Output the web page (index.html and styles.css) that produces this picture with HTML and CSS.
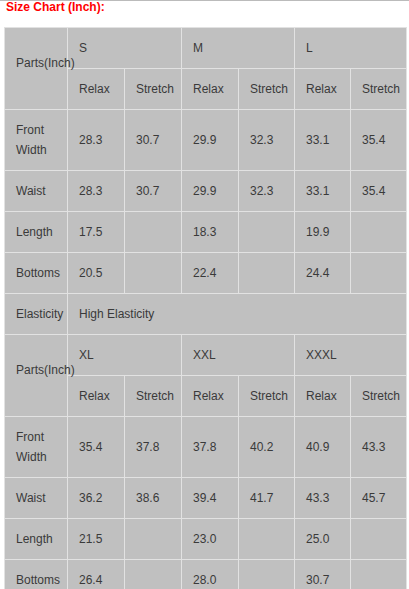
FILE: index.html
```html
<!DOCTYPE html>
<html>
<head>
<meta charset="utf-8">
<link rel="stylesheet" href="styles.css">
</head>
<body>
<div class="page">
  <div class="title">Size Chart (Inch):</div>
  <table class="chart">
    <colgroup>
      <col class="c-first"><col class="c57"><col class="c57"><col class="c57"><col class="c56"><col class="c56"><col class="c56">
    </colgroup>
    <tbody>
      <tr><td rowspan="2" class="parts">Parts(Inch)</td><td colspan="2">S</td><td colspan="2">M</td><td colspan="2">L</td></tr>
      <tr><td>Relax</td><td>Stretch</td><td>Relax</td><td>Stretch</td><td>Relax</td><td>Stretch</td></tr>
      <tr><td>Front Width</td><td>28.3</td><td>30.7</td><td>29.9</td><td>32.3</td><td>33.1</td><td>35.4</td></tr>
      <tr><td>Waist</td><td>28.3</td><td>30.7</td><td>29.9</td><td>32.3</td><td>33.1</td><td>35.4</td></tr>
      <tr><td>Length</td><td>17.5</td><td></td><td>18.3</td><td></td><td>19.9</td><td></td></tr>
      <tr><td>Bottoms</td><td>20.5</td><td></td><td>22.4</td><td></td><td>24.4</td><td></td></tr>
      <tr><td>Elasticity</td><td colspan="6">High Elasticity</td></tr>
      <tr><td rowspan="2" class="parts">Parts(Inch)</td><td colspan="2">XL</td><td colspan="2">XXL</td><td colspan="2">XXXL</td></tr>
      <tr><td>Relax</td><td>Stretch</td><td>Relax</td><td>Stretch</td><td>Relax</td><td>Stretch</td></tr>
      <tr><td>Front Width</td><td>35.4</td><td>37.8</td><td>37.8</td><td>40.2</td><td>40.9</td><td>43.3</td></tr>
      <tr><td>Waist</td><td>36.2</td><td>38.6</td><td>39.4</td><td>41.7</td><td>43.3</td><td>45.7</td></tr>
      <tr><td>Length</td><td>21.5</td><td></td><td>23.0</td><td></td><td>25.0</td><td></td></tr>
      <tr><td>Bottoms</td><td>26.4</td><td></td><td>28.0</td><td></td><td>30.7</td><td></td></tr>
    </tbody>
  </table>
</div>
</body>
</html>
```
FILE: styles.css
```css
html, body {
  margin: 0;
  padding: 0;
  background: #ffffff;
}
.page {
  border-top: 1px solid #bbbbbb;
  font-family: "Liberation Sans", Arial, sans-serif;
}
.title {
  color: #ff0000;
  font-weight: bold;
  font-size: 12px;
  line-height: 12px;
  padding-left: 6px;
}
.chart {
  margin: 14px 0 0 4px;
  border-collapse: collapse;
  table-layout: fixed;
  width: 403px;
  border: 1px solid #d8d8d8;
}
.c-first { width: 63px; }
.c57 { width: 57px; }
.c56 { width: 56px; }
.chart td {
  background: #c0c0c0;
  border: 1px solid #e2e2e2;
  padding: 10px 11px;
  font-size: 12px;
  line-height: 20px;
  color: #3a3a3a;
  vertical-align: middle;
  text-align: left;
  white-space: normal;
}
.chart td.parts {
  padding-bottom: 22px;
  white-space: nowrap;
  overflow: visible;
}
```
